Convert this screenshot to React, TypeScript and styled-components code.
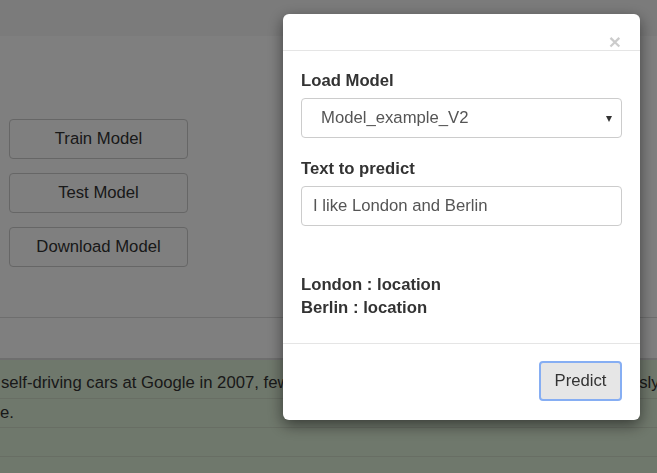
import React, { useState } from "react";
import styled, { createGlobalStyle } from "styled-components";

const GlobalStyle = createGlobalStyle`
  html, body {
    margin: 0;
    padding: 0;
    background: #fff;
    font-family: "Liberation Sans", Arial, Helvetica, sans-serif;
    font-size: 16.7px;
    color: #333;
    overflow: hidden;
  }
  * { box-sizing: border-box; }
`;

const rows = [
  "self-driving cars at Google in 2007, few people outside of the company took him seriously",
  "e.",
  "",
  "",
];

export default function App() {
  const [text, setText] = useState("I like London and Berlin");
  const [results] = useState([
    { word: "London", tag: "location" },
    { word: "Berlin", tag: "location" },
  ]);

  return (
    <>
      <GlobalStyle />
      <Page>
        <Navbar />
        <Content>
          <ActionList>
            <ActionButton>Train Model</ActionButton>
            <ActionButton>Test Model</ActionButton>
            <ActionButton>Download Model</ActionButton>
          </ActionList>
        </Content>
        <Table>
          <HeadRow />
          {rows.map((r, i) => (
            <SuccessRow key={i} $first={i === 0}>
              {r}
            </SuccessRow>
          ))}
        </Table>
      </Page>

      <Backdrop>
        <Dialog>
          <DialogHeader>
            <CloseButton>×</CloseButton>
          </DialogHeader>
          <DialogBody>
            <FormGroup>
              <Label>Load Model</Label>
              <SelectBox>
                <span>Model_example_V2</span>
                <Caret />
              </SelectBox>
            </FormGroup>
            <FormGroup>
              <Label>Text to predict</Label>
              <TextInput
                value={text}
                onChange={(e: React.ChangeEvent<HTMLInputElement>) =>
                  setText(e.target.value)
                }
              />
            </FormGroup>
            <Results>
              {results.map((r) => (
                <div key={r.word}>
                  {r.word} : {r.tag}
                </div>
              ))}
            </Results>
          </DialogBody>
          <DialogFooter>
            <PredictButton>Predict</PredictButton>
          </DialogFooter>
        </Dialog>
      </Backdrop>
    </>
  );
}

const Page = styled.div`
  width: 100%;
  min-height: 473px;
`;

const Navbar = styled.div`
  height: 36px;
  background: #f7f7f7;
`;

const Content = styled.div`
  padding: 83px 0 0 9px;
  height: 281px;
`;

const ActionList = styled.div`
  display: flex;
  flex-direction: column;
  gap: 14px;
  width: 179px;
`;

const ActionButton = styled.div`
  height: 40px;
  display: flex;
  align-items: center;
  justify-content: center;
  border: 1px solid #ccc;
  border-radius: 4px;
  background: #fff;
  color: #333;
`;

const Table = styled.div`
  border-top: 1px solid #ddd;
`;

const HeadRow = styled.div`
  height: 42px;
  border-bottom: 2px solid #ddd;
`;

const SuccessRow = styled.div<{ $first?: boolean }>`
  background: #dff0d8;
  border-bottom: 1px solid #d0dcc8;
  line-height: 22px;
  height: ${(p) => (p.$first ? "39px" : "29px")};
  padding: ${(p) => (p.$first ? "12px 0 0 1px" : "3px 0 0 0")};
  white-space: nowrap;
`;

const Backdrop = styled.div`
  position: fixed;
  inset: 0;
  background: rgba(0, 0, 0, 0.5);
`;

const Dialog = styled.div`
  position: absolute;
  left: 283px;
  top: 14px;
  width: 357px;
  background: #fff;
  border-radius: 6px;
  box-shadow: 0 5px 15px rgba(0, 0, 0, 0.5);
  display: flex;
  flex-direction: column;
`;

const DialogHeader = styled.div`
  height: 37px;
  border-bottom: 1px solid #e5e5e5;
  display: flex;
  justify-content: flex-end;
  align-items: flex-end;
  padding: 0 19px 0 0;
`;

const CloseButton = styled.span`
  font-size: 21px;
  font-weight: bold;
  line-height: 1;
  color: #000;
  opacity: 0.2;
  margin-bottom: -2px;
`;

const DialogBody = styled.div`
  padding: 18px 18px 24px;
  display: flex;
  flex-direction: column;
`;

const FormGroup = styled.div`
  display: flex;
  flex-direction: column;
  margin-bottom: 19px;
`;

const Label = styled.label`
  font-weight: bold;
  line-height: 23px;
  margin-bottom: 6px;
  color: #333;
`;

const SelectBox = styled.div`
  height: 40px;
  border: 1px solid #ccc;
  border-radius: 4px;
  display: flex;
  align-items: center;
  justify-content: space-between;
  padding: 0 9px 0 19px;
  color: #555;
`;

const Caret = styled.span`
  width: 0;
  height: 0;
  border-left: 3.5px solid transparent;
  border-right: 3.5px solid transparent;
  border-top: 6px solid #333;
  margin-top: 1px;
`;

const TextInput = styled.input`
  height: 40px;
  border: 1px solid #ccc;
  border-radius: 4px;
  padding: 0 11px;
  color: #555;
  font-size: 16.7px;
  font-family: inherit;
  outline: none;
`;

const Results = styled.div`
  margin-top: 28px;
  font-weight: bold;
  line-height: 23px;
  color: #333;
`;

const DialogFooter = styled.div`
  border-top: 1px solid #e5e5e5;
  padding: 17px 18px 19px;
  display: flex;
  justify-content: flex-end;
`;

const PredictButton = styled.button`
  width: 83px;
  height: 40px;
  background: #e6e6e6;
  border: 2px solid #86aef3;
  border-radius: 4px;
  color: #333;
  font-size: 16.7px;
  font-family: inherit;
  outline: none;
  padding: 0;
`;
